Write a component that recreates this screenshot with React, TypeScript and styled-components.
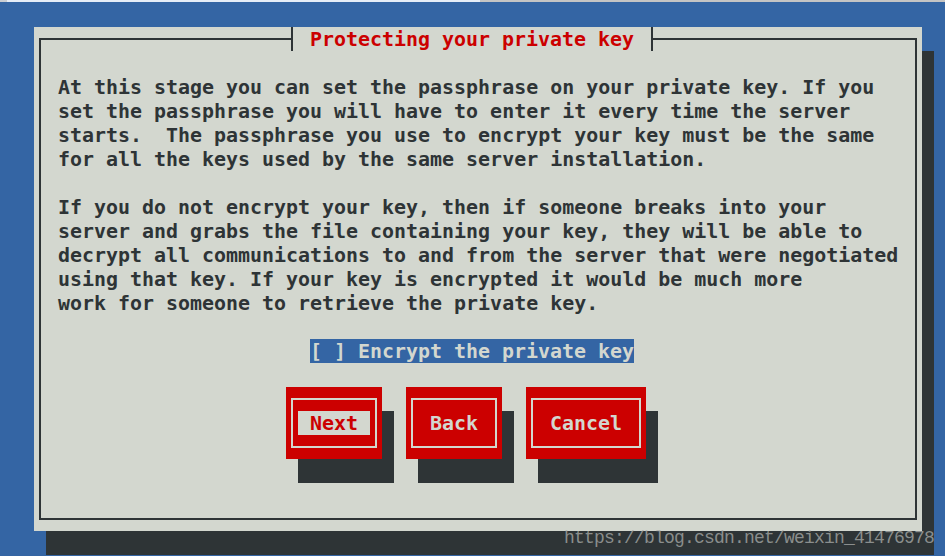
import styled, { createGlobalStyle } from 'styled-components';

const GlobalStyle = createGlobalStyle`
  html, body {
    margin: 0;
    padding: 0;
    background: #3465a4;
  }
`;

const Screen = styled.div`
  position: relative;
  width: 945px;
  height: 556px;
  overflow: hidden;
  background: #3465a4;
  font-family: 'DejaVu Sans Mono', 'Liberation Mono', monospace;
  font-weight: 700;
  font-size: 19.95px;
  line-height: 24px;
`;

const TopStrip = styled.div`
  height: 2px;
  background: linear-gradient(
    to right,
    #c9cdd3 0px,
    #c9cdd3 7px,
    #e6edf7 7px,
    #e6edf7 480px,
    #c4c4c4 480px
  );
`;

const Window = styled.div`
  box-sizing: border-box;
  margin: 25px 0 0 34px;
  width: 888px;
  height: 504px;
  padding: 11px 5px;
  background: #d3d7cf;
  box-shadow: 12px 24px 0 #2e3436;
`;

const Frame = styled.div`
  position: relative;
  box-sizing: border-box;
  height: 100%;
  border: 2px solid #2e3436;
  padding: 35px 0 0 17px;
`;

const Title = styled.div`
  position: absolute;
  top: -13px;
  left: 245px;
  display: flex;
  height: 24px;
`;

const Tee = styled.span<{ $side: 'left' | 'right' }>`
  position: relative;
  width: 12px;
  height: 24px;
  background: #d3d7cf;

  &::before {
    content: '';
    position: absolute;
    left: 5px;
    top: 0;
    width: 2px;
    height: 24px;
    background: #2e3436;
  }

  &::after {
    content: '';
    position: absolute;
    top: 11px;
    height: 2px;
    width: 7px;
    left: ${(p) => (p.$side === 'left' ? '0' : '5px')};
    background: #2e3436;
  }
`;

const TitleText = styled.span`
  background: #d3d7cf;
  color: #cc0000;
  white-space: pre;
`;

const Body = styled.div`
  color: #2e3436;
  white-space: pre;
`;

const CheckRow = styled.div`
  display: flex;
  margin: 24px 0 0 252px;
`;

const CheckBox = styled.span`
  background: #3465a4;
  color: #d3d7cf;
  white-space: pre;
`;

const ButtonRow = styled.div`
  display: flex;
  gap: 24px;
  margin: 24px 0 0 228px;
`;

const Button = styled.button`
  position: relative;
  display: flex;
  margin: 0;
  border: none;
  padding: 24px 12px;
  background: #cc0000;
  box-shadow: 12px 24px 0 #2e3436;
  font: inherit;
  line-height: 24px;
  cursor: pointer;

  &::before {
    content: '';
    position: absolute;
    top: 11px;
    bottom: 11px;
    left: 5px;
    right: 5px;
    border: 2px solid #d3d7cf;
  }
`;

const Label = styled.span<{ $focused?: boolean }>`
  padding: 0 12px;
  white-space: pre;
  background: ${(p) => (p.$focused ? '#d3d7cf' : 'transparent')};
  color: ${(p) => (p.$focused ? '#cc0000' : '#d3d7cf')};
`;

const Watermark = styled.div`
  position: absolute;
  left: 564px;
  top: 529px;
  font-family: 'Liberation Mono', monospace;
  font-weight: 400;
  font-size: 18px;
  line-height: 1;
  letter-spacing: -0.8px;
  color: rgba(170, 173, 170, 0.75);
  white-space: pre;
`;

const lines = [
  'At this stage you can set the passphrase on your private key. If you',
  'set the passphrase you will have to enter it every time the server',
  'starts.  The passphrase you use to encrypt your key must be the same',
  'for all the keys used by the same server installation.',
  '',
  'If you do not encrypt your key, then if someone breaks into your',
  'server and grabs the file containing your key, they will be able to',
  'decrypt all communications to and from the server that were negotiated',
  'using that key. If your key is encrypted it would be much more',
  'work for someone to retrieve the private key.',
];

const buttons = [
  { label: 'Next', focused: true },
  { label: 'Back', focused: false },
  { label: 'Cancel', focused: false },
];

export default function App() {
  return (
    <>
      <GlobalStyle />
      <Screen>
        <TopStrip />
        <Window>
          <Frame>
            <Title>
              <Tee $side="left" />
              <TitleText> Protecting your private key </TitleText>
              <Tee $side="right" />
            </Title>
            <Body>{lines.join('\n')}</Body>
            <CheckRow>
              <CheckBox>[ ] Encrypt the private key</CheckBox>
            </CheckRow>
            <ButtonRow>
              {buttons.map((b) => (
                <Button key={b.label}>
                  <Label $focused={b.focused}>{b.label}</Label>
                </Button>
              ))}
            </ButtonRow>
          </Frame>
        </Window>
        <Watermark>https://blog.csdn.net/weixin_41476978</Watermark>
      </Screen>
    </>
  );
}
